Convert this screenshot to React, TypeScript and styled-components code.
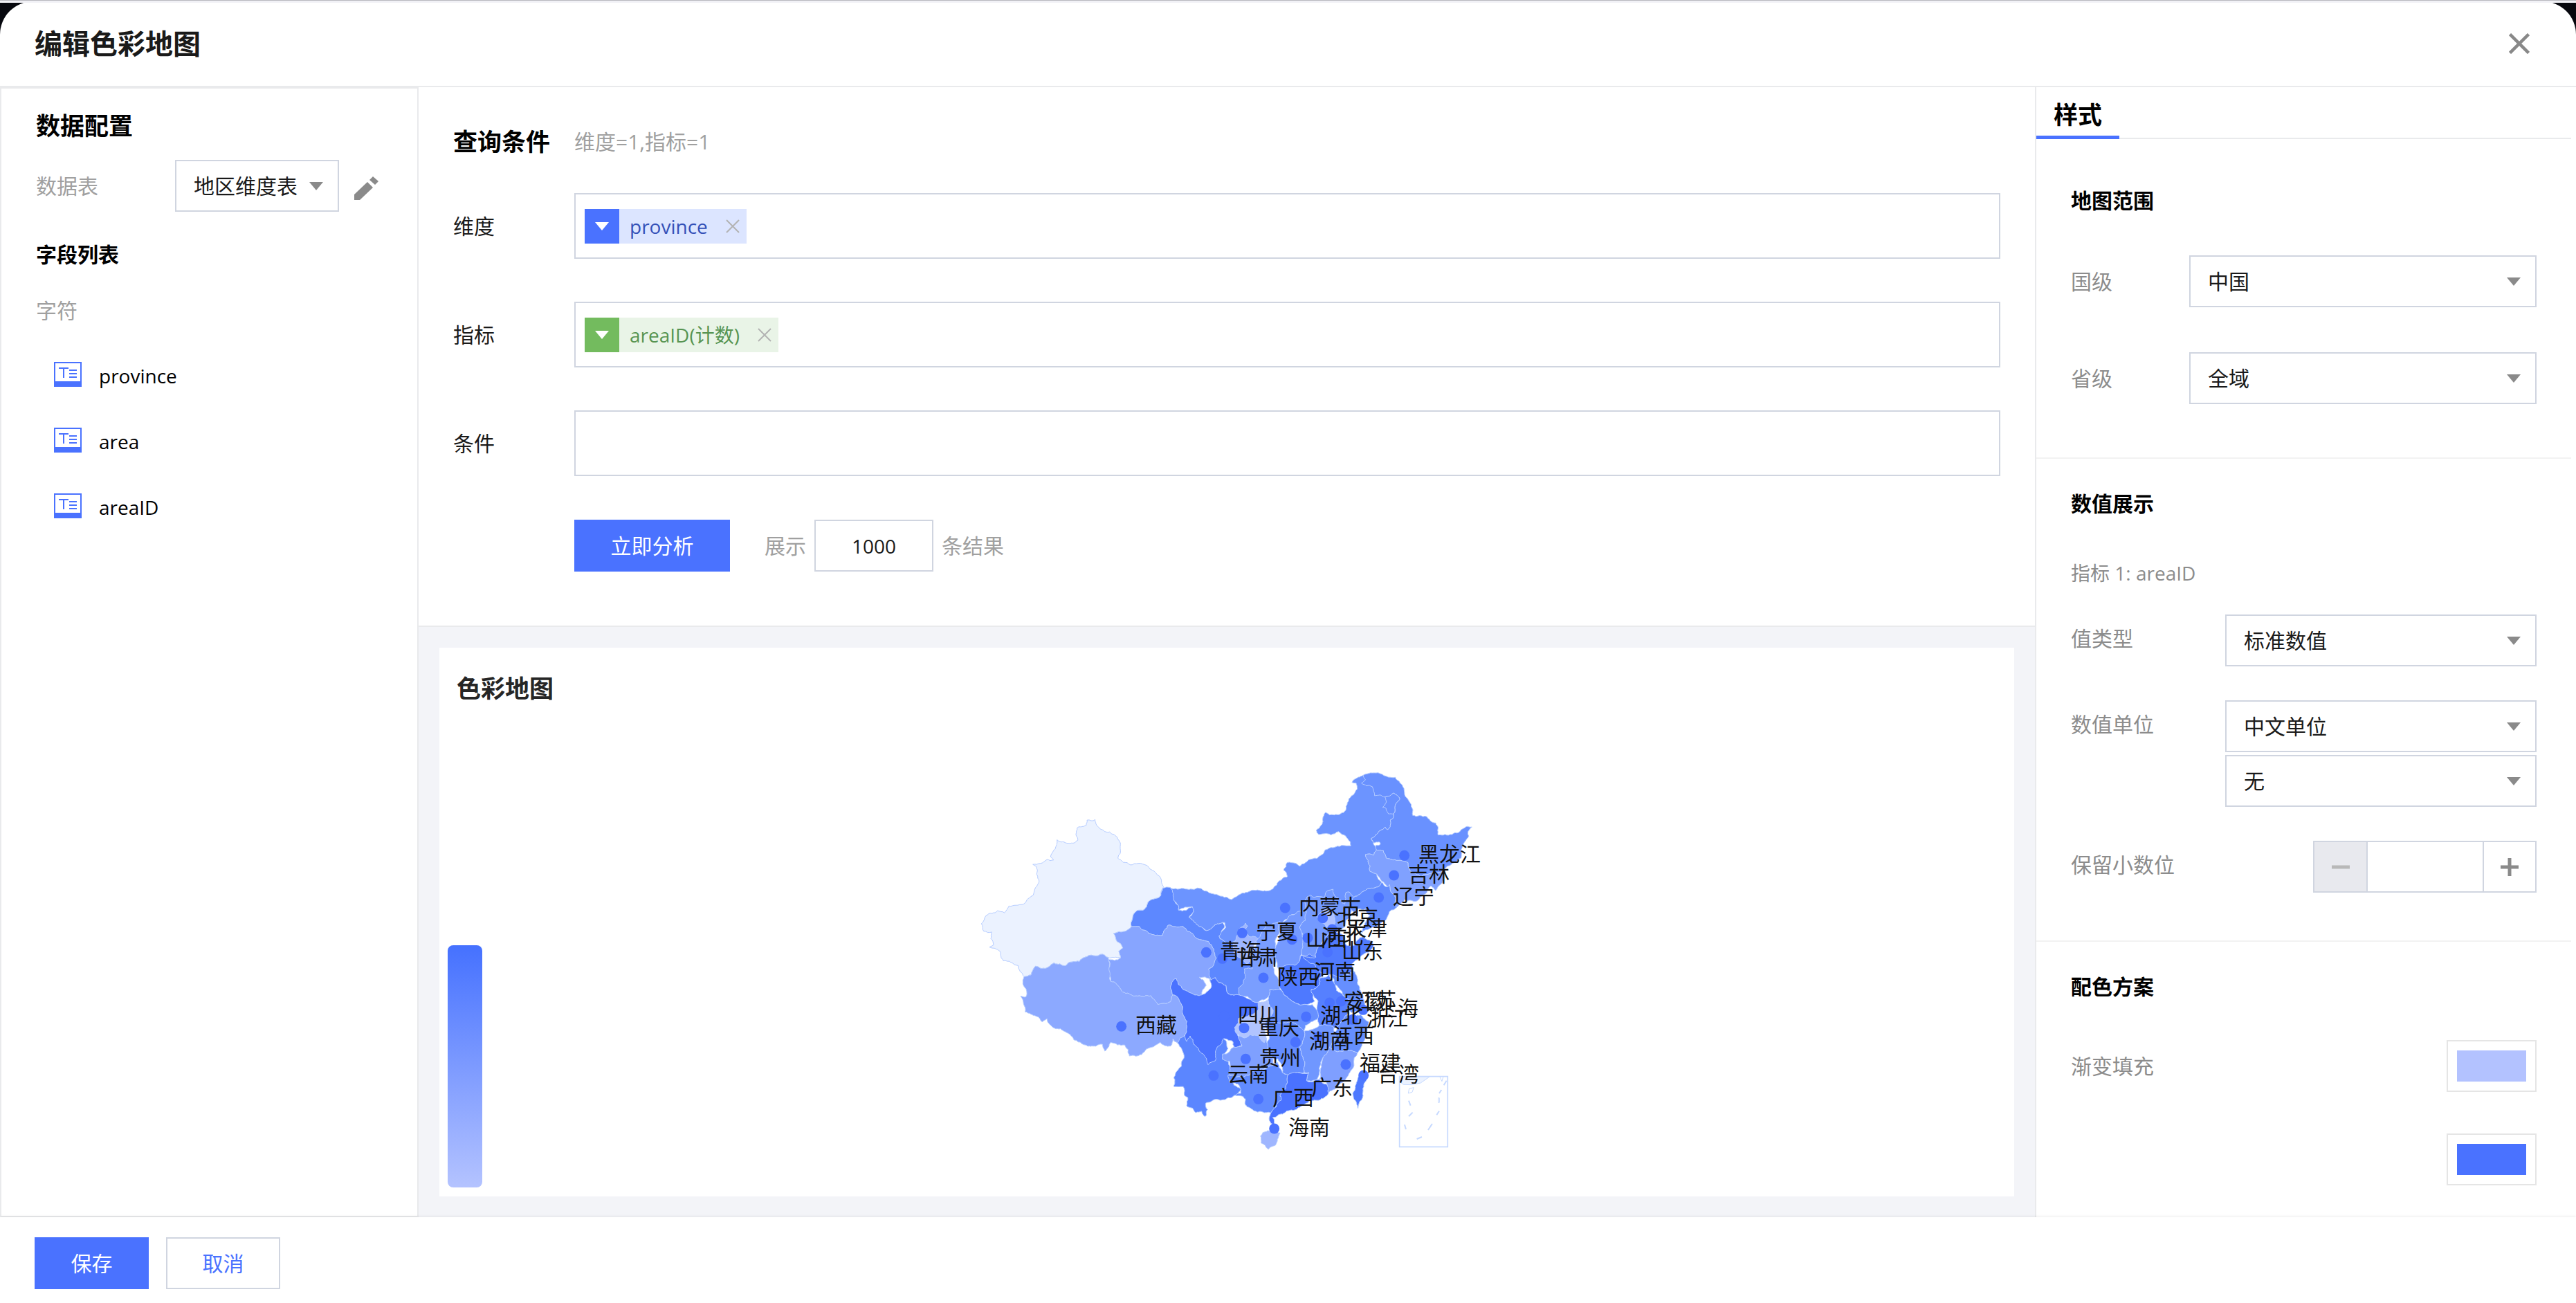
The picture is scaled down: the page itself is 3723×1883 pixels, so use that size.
import React from "react";
import styled, { createGlobalStyle, css } from "styled-components";

const BLUE = "#4a72ff";
const LINE = "#e9eaec";
const FIELD_LINE = "#d0d5e0";

const GlobalStyle = createGlobalStyle`
  *, *::before, *::after { box-sizing: border-box; }
  body {
    margin: 0;
    background: #07080e;
    color: #1a1a1a;
    font-family: "Open Sans", "Noto Sans CJK SC", sans-serif;
    font-size: 30px;
    line-height: 40px;
  }
  button, input, select { font: inherit; color: inherit; margin: 0; }
  h1, h2, h3, p, ul { margin: 0; padding: 0; }
`;

/* ---------- shell ---------- */

const Page = styled.div`
  min-height: 100vh;
  display: flex;
  flex-direction: column;
`;

const TopStrip = styled.div`
  height: 4px;
  background: #f1f1f6;
  border-top: 1px solid #b9b9bf;
  z-index: 1;
`;

const Dialog = styled.section`
  flex: 1;
  display: flex;
  flex-direction: column;
  margin-top: -2px;
  background: #fff;
  border-radius: 48px 48px 0 0;
`;

const Header = styled.header`
  display: flex;
  align-items: center;
  justify-content: space-between;
  height: 124px;
  padding: 0 67px 0 50px;
  border-bottom: 2px solid ${LINE};
`;

const Title = styled.h1`
  font-size: 40px;
  line-height: 56px;
  font-weight: 700;
`;

const IconButton = styled.button`
  display: flex;
  padding: 0;
  border: 0;
  background: none;
  cursor: pointer;
`;

const Main = styled.main`
  flex: 1;
  display: grid;
  grid-template-columns: 605px minmax(0, 1fr) 782px;
`;

const Footer = styled.footer`
  position: relative;
  display: flex;
  gap: 25px;
  padding: 29px 50px 20px;
  background: #fff;
  box-shadow: 0 -1px 4px rgba(0, 0, 0, 0.08);
`;

const Button = styled.button<{ $primary?: boolean; $wide?: boolean }>`
  width: ${(p) => (p.$wide ? 225 : 165)}px;
  height: 75px;
  padding: 0;
  cursor: pointer;
  ${(p) =>
    p.$primary
      ? css`
          border: 0;
          background: ${BLUE};
          color: #fff;
        `
      : css`
          border: 2px solid ${FIELD_LINE};
          background: #fff;
          color: ${BLUE};
        `}
`;

/* ---------- shared form parts ---------- */

const PanelTitle = styled.h2`
  font-size: 35px;
  line-height: 40px;
  font-weight: 700;
  color: #000;
`;

const GroupTitle = styled.h3`
  font-size: 30px;
  line-height: 40px;
  font-weight: 700;
  color: #000;
`;

const MutedLabel = styled.label<{ $dark?: boolean; $raised?: boolean }>`
  line-height: ${(p) => (p.$raised ? 70 : 75)}px;
  color: ${(p) => (p.$dark ? "#8c8c8c" : "#a0a0a0")};
`;

const SelectBox = styled.div`
  display: grid;
  align-items: center;
  width: 100%;
  > * { grid-area: 1 / 1; }
  > svg { justify-self: end; margin-right: 23px; pointer-events: none; }
`;

const NativeSelect = styled.select`
  appearance: none;
  width: 100%;
  height: 75px;
  padding: 0 50px 0 25px;
  border: 2px solid ${FIELD_LINE};
  border-radius: 0;
  background: #fff;
`;

function Caret({ color = "#8a8a8a" }: { color?: string }) {
  return (
    <svg width="20" height="12" viewBox="0 0 20 12" aria-hidden="true">
      <path d="M0 0H20L10 12Z" fill={color} />
    </svg>
  );
}

function Select({ id, value, label }: { id: string; value: string; label?: string }) {
  return (
    <SelectBox>
      <NativeSelect id={id} aria-label={label} defaultValue={value}>
        <option>{value}</option>
      </NativeSelect>
      <Caret />
    </SelectBox>
  );
}

function Cross({ size, width, color }: { size: number; width: number; color: string }) {
  return (
    <svg width={size} height={size} viewBox="0 0 20 20" aria-hidden="true">
      <path d="M1 1L19 19M19 1L1 19" stroke={color} strokeWidth={width} fill="none" />
    </svg>
  );
}

/* ---------- left panel ---------- */

const DataPanel = styled.aside`
  padding: 34px 50px 0;
  border: 2px solid ${LINE};
`;

const TableRow = styled.div`
  display: grid;
  grid-template-columns: 180px 237px auto;
  column-gap: 21px;
  align-items: center;
  justify-content: start;
  margin: 29px 0 42px;
`;

const TypeName = styled.p`
  margin-top: 41px;
  color: #a0a0a0;
`;

const FieldList = styled.ul`
  margin-top: 26px;
  list-style: none;
`;

const FieldItem = styled.li`
  display: flex;
  align-items: center;
  gap: 25px;
  height: 95px;
  padding-left: 26px;
  font-size: 28px;
  color: #000;
`;

function TextFieldIcon() {
  return (
    <svg width="40" height="40" viewBox="0 0 40 40" aria-hidden="true">
      <path d="M0 0H40V36H0Z" fill={BLUE} />
      <path d="M2 2H38V28H2Z" fill="#fff" />
      <path d="M7 8H21V10H15V23H13V10H7ZM22 11H33V13H22ZM22 16H33V18H22ZM22 21H33V23H22Z" fill={BLUE} />
    </svg>
  );
}

function PencilIcon() {
  return (
    <svg width="36" height="42" viewBox="0 0 36 42" aria-hidden="true">
      <path d="M1 41V33L20 15L28 23L9 41ZM23 12L28 7L36 14L31 19Z" fill="#8a8a8a" />
    </svg>
  );
}

/* ---------- centre ---------- */

const Centre = styled.div`
  display: flex;
  flex-direction: column;
  background: #f3f4f8;
`;

const QueryPanel = styled.section`
  display: flex;
  flex-direction: column;
  gap: 62px;
  padding: 59px 50px 78px;
  background: #fff;
  border-bottom: 2px solid ${LINE};
`;

const QueryHead = styled.div`
  display: grid;
  grid-template-columns: 175px 1fr;
  align-items: center;
  margin-bottom: -8px;
`;

const Hint = styled.p`
  color: #a0a0a0;
`;

const QueryRow = styled.div`
  display: grid;
  grid-template-columns: 175px 1fr;
  align-items: center;
`;

const DropZone = styled.div`
  display: flex;
  align-items: center;
  height: 95px;
  padding: 0 13px;
  border: 2px solid ${FIELD_LINE};
`;

const tones = {
  blue: { strong: BLUE, soft: "#dce5ff", text: "#3451b8" },
  green: { strong: "#73bb5e", soft: "#e9f4e7", text: "#579452" },
};

const Chip = styled.span<{ $tone: keyof typeof tones }>`
  display: flex;
  align-items: center;
  height: 50px;
  padding-right: 10px;
  background: ${(p) => tones[p.$tone].soft};
  color: ${(p) => tones[p.$tone].text};
  font-size: 28px;
`;

const ChipMenu = styled.button<{ $tone: keyof typeof tones }>`
  display: flex;
  align-items: center;
  justify-content: center;
  width: 50px;
  height: 50px;
  padding: 0;
  border: 0;
  background: ${(p) => tones[p.$tone].strong};
`;

const ChipText = styled.span`
  padding: 0 26px 0 15px;
`;

const RunRow = styled.div`
  display: flex;
  align-items: center;
  gap: 12px;
  padding: 1px 0 0 175px;
  color: #a0a0a0;
`;

const LimitLabel = styled.label`
  padding-left: 38px;
`;

const LimitInput = styled.input`
  width: 172px;
  height: 75px;
  border: 2px solid ${FIELD_LINE};
  color: #1a1a1a;
  font-size: 28px;
  text-align: center;
`;

const ChartCard = styled.section`
  flex: 1;
  display: flex;
  flex-direction: column;
  margin: 30px;
  padding: 39px 12px 13px;
  background: #fff;
`;

const ChartTitle = styled(PanelTitle)`
  padding-left: 13px;
  color: #262626;
`;

const ChartBody = styled.div`
  flex: 1;
  display: grid;
  grid-template-columns: 50px 1fr 50px;
  align-items: end;
  justify-items: center;
`;

const Legend = styled.div`
  width: 50px;
  height: 350px;
  border-radius: 8px;
  background: linear-gradient(#4571ff, #b4c3ff);
`;

const MapLabel = styled.text`
  font-size: 30px;
  fill: #111;
`;

/* ---------- map data ---------- */

const sheets = {
  west: { x: 0, y: 0, sx: 3, sy: 2.529 },
  north: { x: 360, y: 20, sx: 3, sy: 3 },
  south: { x: 360, y: 270, sx: 3, sy: 3 },
};
type Sheet = keyof typeof sheets;
type Pt = [number, number];

function project(sheet: Sheet, [x, y]: Pt): Pt {
  const s = sheets[sheet];
  return [s.x + x / s.sx, s.y + y / s.sy];
}

function noise(x: number, y: number) {
  const v = Math.sin(x * 12.9898 + y * 78.233) * 43758.5453;
  return (v - Math.floor(v)) * 2 - 1;
}

// Splits an edge again and again so that borders get a natural, uneven line.
// The shift depends on the midpoint only, so neighbours share the same border.
function roughen(a: Pt, b: Pt, out: Pt[]) {
  const dx = b[0] - a[0];
  const dy = b[1] - a[1];
  const len = Math.hypot(dx, dy);
  if (len < 3.5) {
    out.push(b);
    return;
  }
  const flip = dx > 0 || (dx === 0 && dy > 0) ? 1 : -1;
  const mx = (a[0] + b[0]) / 2;
  const my = (a[1] + b[1]) / 2;
  const k = noise(Math.round(mx * 4), Math.round(my * 4)) * 0.15 * flip;
  const m: Pt = [mx - dy * k, my + dx * k];
  roughen(a, m, out);
  roughen(m, b, out);
}

function outline(sheet: Sheet, text: string) {
  const pts = text.split(" ").map((p) => project(sheet, p.split(",").map(Number) as Pt));
  const out: Pt[] = [pts[0]];
  pts.forEach((p, i) => roughen(p, pts[(i + 1) % pts.length], out));
  return "M" + out.map((p) => p[0].toFixed(1) + " " + p[1].toFixed(1)).join("L") + "Z";
}

const regions: [string, Sheet, string, string][] = [
  ["内蒙古", "north", "#6c94ff", "-148,547 -80,554 -20,551 10,563 60,580 100,590 120,600 150,580 200,563 250,562 300,553 325,520 362,500 345,472 360,440 380,440 415,455 435,445 455,427 490,422 512,405 525,385 560,375 600,365 637,367 635,350 615,325 585,305 550,320 530,313 497,318 487,300 500,290 515,250 527,222 565,233 615,212 622,180 640,150 665,120 660,95 642,92 650,80 690,60 740,80 785,155 850,165 822,228 820,248 808,255 797,297 785,285 765,300 725,335 735,360 748,385 735,408 700,405 712,430 720,478 750,490 770,525 755,545 700,560 650,590 640,620 560,640 445,670 380,665 340,700 310,705 280,790 200,790 130,800 80,775 65,764 70,745 95,720 90,700 80,699 40,717 10,735 -20,717 -65,678 -45,652 -50,631 -110,646 -130,604"],
  ["甘肃", "west", "#5d88ff", "932,512 900,515 893,540 850,557 815,595 785,600 765,655 800,655 840,680 900,688 925,650 990,655 1030,680 1100,710 1133,770 1100,810 1105,850 1130,842 1145,860 1175,870 1185,900 1235,905 1260,870 1300,810 1300,740 1260,700 1220,705 1200,715 1150,700 1145,690 1170,655 1160,640 1120,655 1090,670 1060,655 1015,622 1035,600 1030,583 970,595 950,560"],
  ["青海", "west", "#87a5ff", "688,680 765,655 800,655 840,680 900,688 925,650 990,655 1030,680 1100,710 1133,770 1100,810 1110,845 1060,840 1090,870 1070,905 1030,900 990,885 960,845 940,860 945,905 935,930 880,940 850,908 820,912 720,885 675,855 665,775 718,770 710,745 728,733 703,710"],
  ["新疆", "west", "#ebf2ff", "300,838 275,798 210,780 195,745 150,730 168,722 160,675 125,672 115,645 135,615 185,597 215,605 235,580 265,577 340,540 350,512 365,492 352,435 338,428 400,410 428,412 415,400 443,338 460,346 512,350 533,340 530,295 570,285 573,266 608,264 615,285 650,308 690,318 718,355 718,385 707,405 730,420 795,424 865,453 905,510 893,540 850,557 815,595 785,600 765,655 688,680 703,710 728,733 710,745 718,770 665,768 630,757 555,770 540,783 480,798 430,788 405,803 350,800 330,832"],
  ["西藏", "west", "#8ca9ff", "300,838 330,832 350,800 405,803 430,788 480,798 540,783 555,770 630,757 665,768 675,855 720,885 820,912 850,908 880,940 935,930 945,905 965,912 988,955 998,1050 985,1075 965,1080 945,1065 935,1092 890,1078 830,1103 810,1123 757,1128 752,1105 737,1088 675,1078 650,1110 640,1085 600,1092 555,1085 515,1068 480,1040 400,992 380,1003 345,980 305,967 285,910 308,912 310,885 295,865"],
  ["云南", "west", "#5b86ff", "998,1050 965,1080 985,1105 983,1165 950,1205 950,1240 990,1240 995,1272 1010,1280 1005,1310 1030,1318 1045,1335 1070,1330 1080,1348 1088,1348 1088,1300 1150,1290 1200,1280 1225,1268 1240,1250 1210,1235 1195,1200 1185,1145 1160,1140 1185,1100 1165,1065 1098,1100 1020,1055"],
  ["四川", "west", "#4a72ff", "945,905 940,860 960,845 990,885 1030,900 1070,905 1110,880 1105,850 1130,842 1145,860 1175,870 1185,900 1235,905 1285,923 1315,932 1320,990 1290,1020 1225,1025 1225,1050 1245,1090 1210,1095 1205,1075 1165,1065 1155,1085 1130,1110 1130,1145 1098,1160 1075,1120 1035,1085 1020,1055 1005,1075 998,1050 988,955 965,912"],
  ["陕西", "south", "#7a9eff", "330,-55 270,-40 250,-5 230,20 220,60 205,100 210,150 175,150 180,185 170,215 150,235 155,265 190,270 205,285 235,295 280,270 285,240 330,240 325,200 305,170 315,100 310,50 325,0"],
  ["山西", "south", "#759aff", "370,-80 445,-95 440,-60 415,-30 425,0 430,50 418,95 415,115 395,135 360,145 320,145 310,100 312,50 330,0 325,-45"],
  ["宁夏", "north", "#9fb6ff", "155,725 180,702 190,715 180,740 195,760 235,770 215,800 205,850 190,880 170,860 130,830 125,800 140,765"],
  ["河北", "north", "#749aff", "440,600 460,580 480,590 520,590 540,560 560,555 575,590 610,620 615,570 630,567 650,590 650,625 640,650 615,690 610,720 560,740 520,770 500,800 485,850 425,840 430,770 415,720 440,690 445,650 440,620"],
  ["北京", "north", "#b0c2ff", "490,670 530,640 560,660 570,700 555,720 530,720 500,695"],
  ["辽宁", "north", "#628cff", "650,590 700,560 755,545 770,525 795,545 805,535 830,590 835,635 800,665 770,700 720,725 685,745 700,700 720,670 700,640 670,640 650,655 635,640"],
  ["黑龙江", "north", "#6991ff", "690,62 755,50 790,65 830,70 862,110 870,145 890,175 905,235 965,240 1005,268 1015,320 1075,318 1115,297 1162,285 1145,305 1148,325 1130,350 1115,420 1085,440 1070,450 1030,480 960,490 940,500 900,480 885,440 850,430 790,420 778,388 748,385 745,365 765,360 760,350 735,355 725,335 765,300 785,285 797,297 808,255 820,248 822,228 850,165 822,138 785,155 740,150 730,110 705,107 683,95 700,80"],
  ["呼伦贝尔", "north", "#6991ff", "785,155 822,138 850,165 822,228 800,228 790,205 775,200 790,180"],
  ["吉林", "north", "#80a1ff", "700,405 735,408 748,385 778,388 790,420 850,430 885,440 900,480 940,500 960,490 1030,480 1040,500 1025,535 1005,560 985,540 960,575 925,605 870,600 835,635 830,590 805,535 795,545 770,520 750,490 720,478 712,430"],
  ["江苏", "south", "#668fff", "545,170 650,160 665,210 690,265 700,320 640,340 600,260 570,220"],
  ["河南", "south", "#4e79ff", "320,145 395,135 415,115 418,95 500,100 540,170 500,190 500,220 465,240 480,290 400,300 345,260 325,200"],
  ["山东", "south", "#507bff", "425,90 485,100 500,50 560,-10 610,10 620,50 650,50 690,10 735,50 680,95 640,130 650,165 580,185 500,160 480,130"],
  ["安徽", "south", "#5680ff", "500,220 500,190 545,175 570,220 575,245 640,300 620,350 580,400 500,395 490,330 495,290 465,240"],
  ["湖北", "south", "#6790ff", "280,270 285,240 330,240 345,260 400,300 470,305 490,330 490,370 440,395 430,420 400,395 330,385 270,410 262,380 300,330 280,300"],
  ["重庆", "south", "#b1c4ff", "235,295 275,285 280,310 300,330 270,370 262,410 270,450 262,470 240,440 200,435 175,450 140,430 133,405 150,365 200,350 235,330"],
  ["湖南", "south", "#648dff", "275,400 330,385 400,390 435,420 430,460 415,490 430,540 435,600 400,600 365,615 340,600 320,540 300,540 275,500"],
  ["江西", "south", "#7097ff", "435,420 500,395 560,400 580,440 545,490 520,530 500,600 490,630 445,635 455,600 435,600 430,540 415,490 430,460"],
  ["浙江", "south", "#658fff", "580,400 620,350 680,350 715,380 705,430 690,470 665,515 620,500 580,510 545,490 570,450"],
  ["福建", "south", "#7f9fff", "545,490 580,510 620,500 665,515 650,560 620,620 580,660 540,690 530,640 500,630 505,590 520,530"],
  ["贵州", "south", "#7fa0ff", "80,520 110,510 130,490 165,485 150,440 175,450 200,435 240,440 262,470 270,450 275,500 300,540 300,570 250,585 200,610 140,620 110,610 110,550 80,540"],
  ["广西", "south", "#618bff", "105,610 140,620 200,610 250,585 320,555 340,600 365,610 355,660 330,700 340,720 290,775 215,765 180,740 180,715 130,700 160,690 155,660 110,640"],
  ["广东", "south", "#4a72ff", "365,610 400,600 455,600 445,635 500,630 530,650 540,690 520,710 440,735 400,760 320,785 298,795 305,825 290,820 283,795 290,775 335,720 330,700 355,660"],
  ["海南", "south", "#9fb6ff", "255,860 300,850 330,862 318,890 310,915 280,932 248,905 245,875"],
  ["台湾", "south", "#4d79ff", "675,600 712,600 700,640 690,700 672,735 668,755 650,715 645,690 660,650"],
];

const places: [string, Sheet, number, number][] = [
  ["西藏", "west", 722, 1020],
  ["黑龙江", "north", 869, 409],
  ["吉林", "north", 824, 495],
  ["辽宁", "north", 758, 591],
  ["内蒙古", "north", 352, 636],
  ["北京", "north", 515, 680],
  ["天津", "north", 556, 729],
  ["河北", "north", 450, 766],
  ["山西", "north", 382, 773],
  ["山东", "north", 536, 828],
  ["宁夏", "north", 166, 745],
  ["青海", "north", 10, 829],
  ["甘肃", "north", 80, 856],
  ["陕西", "south", 258, 189],
  ["河南", "south", 418, 168],
  ["安徽", "south", 545, 297],
  ["江苏", "south", 595, 291],
  ["上海", "south", 690, 328],
  ["浙江", "south", 645, 370],
  ["湖北", "south", 443, 358],
  ["四川", "south", 88, 355],
  ["重庆", "south", 174, 407],
  ["湖南", "south", 397, 468],
  ["江西", "south", 497, 445],
  ["贵州", "south", 181, 541],
  ["云南", "south", 42, 613],
  ["福建", "south", 615, 565],
  ["台湾", "south", 692, 612],
  ["广东", "south", 405, 668],
  ["广西", "south", 236, 715],
  ["海南", "south", 305, 843],
];

function ChinaMap() {
  return (
    <svg width="800" height="636" viewBox="-7 0 800 636" role="img" aria-label="色彩地图">
      <g stroke="#b5ccff" strokeWidth="1" strokeLinejoin="round">
        {regions.map(([name, sheet, fill, pts]) => (
          <path key={name} d={outline(sheet, pts)} fill={fill} />
        ))}
      </g>
      <g transform="translate(360 270) scale(0.3333)" fill="none" stroke="#c6d9ff" strokeWidth="5">
        <path d="M850 617H980L940 645L900 653L865 652L850 640Z" fill="#ebf2ff" strokeWidth="3" />
        <path d="M848 617H1057V922H848Z" />
        <path d="M886 690L890 670L910 665L903 685ZM1016 710H1021V730H1016ZM1022 617L1032 638L1038 617" strokeWidth="3" />
        <path d="M1052 635L1040 655M1030 675L1020 690M888 722L896 743M1020 767L1009 784M905 773L888 790M870 826L876 846M990 822L972 849M945 879L923 888" strokeWidth="6" />
      </g>
      <g fill={BLUE}>
        {places.map(([name, sheet, x, y]) => {
          const [cx, cy] = project(sheet, [x, y]);
          return <circle key={name} cx={cx} cy={cy} r="7.5" />;
        })}
      </g>
      {places.map(([name, sheet, x, y]) => {
        const [cx, cy] = project(sheet, [x, y]);
        return (
          <MapLabel key={name} x={Math.round(cx + 20)} y={Math.round(cy + 9)}>
            {name}
          </MapLabel>
        );
      })}
    </svg>
  );
}

/* ---------- right panel ---------- */

const StylePanel = styled.aside`
  padding-right: 7px;
  border-left: 2px solid ${LINE};
`;

const Tabs = styled.div`
  display: flex;
  box-shadow: inset 0 -2px ${LINE};
`;

const Tab = styled.button`
  width: 120px;
  height: 75px;
  padding: 10px 0 0;
  border: 0;
  border-bottom: 5px solid ${BLUE};
  background: none;
  color: #000;
  font-size: 35px;
  font-weight: 700;
`;

const Section = styled.section<{ $first?: boolean; $last?: boolean }>`
  display: flex;
  flex-direction: column;
  padding: ${(p) => (p.$first ? "69px 50px 77px" : "45px 50px 69px")};
  border-bottom: ${(p) => (p.$last ? "0" : "2px solid #f2f2f2")};
  ${(p) => p.$last && "padding-bottom: 20px;"}
`;

const Rows = styled.div<{ $top: number; $gap: number }>`
  display: flex;
  flex-direction: column;
  gap: ${(p) => p.$gap}px;
  margin-top: ${(p) => p.$top}px;
`;

const FormRow = styled.div<{ $label: number }>`
  display: grid;
  grid-template-columns: ${(p) => p.$label}px 1fr;
`;

const EndRow = styled.div`
  display: flex;
  justify-content: space-between;
`;

const Stack = styled.div`
  display: flex;
  flex-direction: column;
  gap: 4px;
`;

const MetricName = styled.p`
  margin-top: 60px;
  color: #8c8c8c;
  font-size: 28px;
`;

const Stepper = styled.div`
  display: grid;
  grid-template-columns: 75px 170px 74px;
  height: 75px;
  border: 2px solid ${FIELD_LINE};
`;

const StepButton = styled.button<{ $off?: boolean }>`
  display: flex;
  align-items: center;
  justify-content: center;
  padding: 0;
  border: 0;
  background: ${(p) => (p.$off ? "#e8e9ee" : "#fff")};
`;

const StepInput = styled.input`
  width: 100%;
  border: solid ${FIELD_LINE};
  border-width: 0 2px;
  text-align: center;
`;

const Swatches = styled.div`
  display: flex;
  flex-direction: column;
  gap: 60px;
`;

const Swatch = styled.input`
  appearance: none;
  width: 130px;
  height: 75px;
  padding: 13px;
  border: 2px solid #e5e5e5;
  background: #fff;
  &::-webkit-color-swatch-wrapper { padding: 0; }
  &::-webkit-color-swatch { border: 0; border-radius: 0; }
`;

/* ---------- app ---------- */

function DragChip({ tone, children }: { tone: keyof typeof tones; children: string }) {
  return (
    <Chip $tone={tone}>
      <ChipMenu $tone={tone} type="button" aria-label="菜单">
        <Caret color="#fff" />
      </ChipMenu>
      <ChipText>{children}</ChipText>
      <IconButton type="button" aria-label="移除">
        <Cross size={20} width={2} color="#b3b3b3" />
      </IconButton>
    </Chip>
  );
}

export default function App() {
  return (
    <Page>
      <GlobalStyle />
      <TopStrip />
      <Dialog>
        <Header>
          <Title>编辑色彩地图</Title>
          <IconButton type="button" aria-label="关闭">
            <Cross size={30} width={3} color="#888" />
          </IconButton>
        </Header>
        <Main>
          <DataPanel>
            <PanelTitle>数据配置</PanelTitle>
            <TableRow>
              <MutedLabel htmlFor="table">数据表</MutedLabel>
              <Select id="table" value="地区维度表" />
              <IconButton type="button" aria-label="编辑">
                <PencilIcon />
              </IconButton>
            </TableRow>
            <GroupTitle>字段列表</GroupTitle>
            <TypeName>字符</TypeName>
            <FieldList>
              {["province", "area", "areaID"].map((name) => (
                <FieldItem key={name}>
                  <TextFieldIcon />
                  {name}
                </FieldItem>
              ))}
            </FieldList>
          </DataPanel>

          <Centre>
            <QueryPanel>
              <QueryHead>
                <PanelTitle>查询条件</PanelTitle>
                <Hint>维度=1,指标=1</Hint>
              </QueryHead>
              <QueryRow>
                <span>维度</span>
                <DropZone>
                  <DragChip tone="blue">province</DragChip>
                </DropZone>
              </QueryRow>
              <QueryRow>
                <span>指标</span>
                <DropZone>
                  <DragChip tone="green">areaID(计数)</DragChip>
                </DropZone>
              </QueryRow>
              <QueryRow>
                <span>条件</span>
                <DropZone />
              </QueryRow>
              <RunRow>
                <Button $primary $wide type="button">立即分析</Button>
                <LimitLabel htmlFor="limit">展示</LimitLabel>
                <LimitInput id="limit" defaultValue="1000" />
                <span>条结果</span>
              </RunRow>
            </QueryPanel>
            <ChartCard>
              <ChartTitle>色彩地图</ChartTitle>
              <ChartBody>
                <Legend />
                <ChinaMap />
              </ChartBody>
            </ChartCard>
          </Centre>

          <StylePanel>
            <Tabs>
              <Tab type="button">样式</Tab>
            </Tabs>
            <Section $first>
              <GroupTitle>地图范围</GroupTitle>
              <Rows $top={59} $gap={65}>
                <FormRow $label={171}>
                  <MutedLabel $dark htmlFor="country">国级</MutedLabel>
                  <Select id="country" value="中国" />
                </FormRow>
                <FormRow $label={171}>
                  <MutedLabel $dark htmlFor="province">省级</MutedLabel>
                  <Select id="province" value="全域" />
                </FormRow>
              </Rows>
            </Section>
            <Section>
              <GroupTitle>数值展示</GroupTitle>
              <MetricName>指标 1: areaID</MetricName>
              <Rows $top={40} $gap={49}>
                <FormRow $label={223}>
                  <MutedLabel $dark $raised htmlFor="kind">值类型</MutedLabel>
                  <Select id="kind" value="标准数值" />
                </FormRow>
                <FormRow $label={223}>
                  <MutedLabel $dark $raised htmlFor="unit">数值单位</MutedLabel>
                  <Stack>
                    <Select id="unit" value="中文单位" />
                    <Select id="unit-size" label="单位" value="无" />
                  </Stack>
                </FormRow>
                <EndRow>
                  <MutedLabel $dark $raised htmlFor="digits">保留小数位</MutedLabel>
                  <Stepper>
                    <StepButton $off disabled type="button" aria-label="减少">
                      <svg width="26" height="26" viewBox="0 0 26 26" aria-hidden="true">
                        <path d="M0 13H26" stroke="#b8b8b8" strokeWidth="5" />
                      </svg>
                    </StepButton>
                    <StepInput id="digits" inputMode="numeric" defaultValue="" />
                    <StepButton type="button" aria-label="增加">
                      <svg width="26" height="26" viewBox="0 0 26 26" aria-hidden="true">
                        <path d="M0 13H26M13 0V26" stroke="#8a8a8a" strokeWidth="5" />
                      </svg>
                    </StepButton>
                  </Stepper>
                </EndRow>
              </Rows>
            </Section>
            <Section $last>
              <GroupTitle>配色方案</GroupTitle>
              <Rows $top={57} $gap={60}>
                <EndRow>
                  <MutedLabel $dark htmlFor="from">渐变填充</MutedLabel>
                  <Swatches>
                    <Swatch id="from" type="color" defaultValue="#b3c2ff" />
                    <Swatch type="color" aria-label="结束颜色" defaultValue="#4a72ff" />
                  </Swatches>
                </EndRow>
              </Rows>
            </Section>
          </StylePanel>
        </Main>
        <Footer>
          <Button $primary type="button">保存</Button>
          <Button type="button">取消</Button>
        </Footer>
      </Dialog>
    </Page>
  );
}
